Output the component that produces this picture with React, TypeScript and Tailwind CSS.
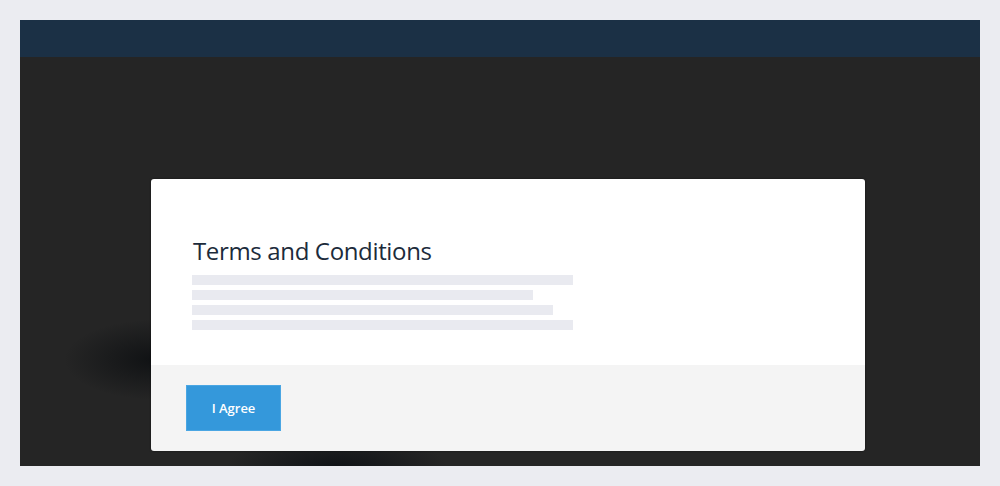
import React from 'react'

const styles = {
  bar: "h-[10px] bg-[#e9eaf0]",
  title: "pl-px text-[24px] leading-none text-[#1c2b3b] font-['Open_Sans',sans-serif] tracking-[-0.35px]",
  button:
    "w-[95px] h-[46px] pt-[2px] bg-[#3498db] text-white text-[13px] font-semibold font-['Open_Sans',sans-serif] border border-[#4aa6e3]",
}

const App = () => {
  const lines = [381, 341, 361, 381]
  return (
    <div className="w-[1000px] h-[486px] bg-[#ebecf1] p-5">
      <div className="w-[960px] h-[446px] flex flex-col">
        <div className="h-[37px] bg-[#1b3045]" />
        <div className="flex-1 bg-[#252525] bg-[radial-gradient(ellipse_90px_40px_at_14%_74%,#101214_0%,transparent_100%),radial-gradient(ellipse_110px_30px_at_33%_100%,#101317_0%,transparent_100%)] pl-[131px] pt-[122px]">
          <div className="w-[714px] h-[272px] rounded-[3px] overflow-hidden flex flex-col shadow-[0_0_2px_rgba(0,0,0,0.6)]">
            <div className="h-[186px] bg-white pl-[41px] pt-[60px]">
              <h1 className={styles.title}>Terms and Conditions</h1>
              <div className="flex flex-col gap-[5px] mt-[12px]">
                {lines.map((w, i) => (
                  <div key={i} className={styles.bar} style={{ width: w }} />
                ))}
              </div>
            </div>
            <div className="flex-1 bg-[#f4f4f4] pl-[35px] pt-[20px]">
              <button type="button" className={styles.button}>
                I Agree
              </button>
            </div>
          </div>
        </div>
      </div>
    </div>
  )
}

export default App
